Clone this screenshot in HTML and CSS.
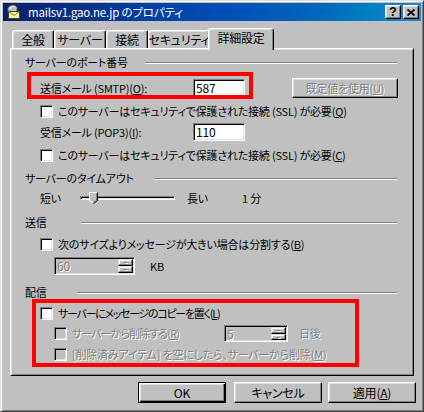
FILE: index.html
```html
<!DOCTYPE html>
<html lang="ja">
<head>
<meta charset="utf-8">
<title>mailsv1.gao.ne.jp のプロパティ</title>
<link rel="stylesheet" href="styles.css">
</head>
<body>
<div class="window">
  <div class="titlebar">
    <svg class="appicon" viewBox="0 0 16 16" width="16" height="16">
      <path d="M3 7 C2 3 5 1 8 1 C11 1 13 3 12 6 L12 8 L3 8 Z" fill="#c0c0c0" stroke="#404040" stroke-width="1"/>
      <path d="M4.5 5 C5 3 7 2.5 9 2.5" fill="none" stroke="#ffffff" stroke-width="1"/>
      <rect x="3.5" y="7.5" width="11" height="7" fill="#ffff99" stroke="#404040" stroke-width="1"/>
      <path d="M3.5 7.5 L9 11.5 L14.5 7.5" fill="none" stroke="#808000" stroke-width="1"/>
    </svg>
    <span class="title">mailsv1.gao.ne.jp のプロパティ</span>
    <div class="tbtns">
      <span class="tbtn help">?</span>
      <span class="tbtn close">
        <svg viewBox="0 0 8 7" width="8" height="7"><path d="M0.5 0.5 L7.5 6.5 M7.5 0.5 L0.5 6.5" stroke="#000" stroke-width="1.7" fill="none"/></svg>
      </span>
    </div>
  </div>

  <div class="tabs">
    <div class="tab w42">全般</div>
    <div class="tab w52">サーバー</div>
    <div class="tab w42">接続</div>
    <div class="tab w62">セキュリティ</div>
    <div class="tab sel">詳細設定</div>
  </div>

  <div class="panel">
    <div class="hdr"><span class="hdr-text">サーバーのポート番号</span><span class="rule r252"></span></div>

    <div class="row h20 mt8 ind1">
      <span class="lbl w153">送信メール (SMTP)(<u>O</u>):</span>
      <span class="edit">587</span>
      <span class="btn3d dbtn disabled">既定値を使用(<u>U</u>)</span>
    </div>

    <div class="row h17 mt5 ind1">
      <span class="chk"></span><span class="ctext">このサーバーはセキュリティで保護された接続 (SSL) が必要(<u>Q</u>)</span>
    </div>

    <div class="row h18 mt3 ind1">
      <span class="lbl w153">受信メール (POP3)(<u>I</u>):</span>
      <span class="edit">110</span>
    </div>

    <div class="row h17 mt6 ind1">
      <span class="chk"></span><span class="ctext">このサーバーはセキュリティで保護された接続 (SSL) が必要(<u>C</u>)</span>
    </div>

    <div class="hdr mt6"><span class="hdr-text">サーバーのタイムアウト</span><span class="rule r243"></span></div>

    <div class="row h16 mt4 ind1">
      <span class="lbl w40">短い</span>
      <span class="slider">
        <span class="track"></span>
        <svg class="thumb" viewBox="0 0 9 12" width="9" height="12">
          <path d="M0.5 0.5 H8.5 V8.5 L4.5 11.5 L0.5 8.5 Z" fill="#c0c0c0" stroke="none"/>
          <path d="M0.5 8.5 V0.5 H8" fill="none" stroke="#ffffff" stroke-width="1"/>
          <path d="M8.5 0.5 V8.5 L4.5 11.5" fill="none" stroke="#000000" stroke-width="1"/>
          <path d="M7.5 1.5 V8 L4.5 10.3" fill="none" stroke="#808080" stroke-width="1"/>
          <path d="M0.5 8.5 L4 11" fill="none" stroke="#ffffff" stroke-width="1"/>
        </svg>
      </span>
      <span class="lbl w55">長い</span>
      <span class="lbl">1 分</span>
    </div>

    <div class="hdr mt8"><span class="hdr-text">送信</span><span class="rule r316"></span></div>

    <div class="row h17 mt6 ind1">
      <span class="chk"></span><span class="ctext">次のサイズよりメッセージが大きい場合は分割する(<u>B</u>)</span>
    </div>

    <div class="row h18 mt4 ind2">
      <span class="spin w81">
        <span class="spin-val">60</span>
        <span class="spin-btns"><span class="sb up"></span><span class="sb down"></span></span>
      </span>
      <span class="lbl ml15">KB</span>
    </div>

    <div class="hdr mt9"><span class="hdr-text">配信</span><span class="rule r320"></span></div>

    <div class="row h17 mt5 ind1">
      <span class="chk"></span><span class="ctext tight2">サーバーにメッセージのコピーを置く(<u>L</u>)</span>
    </div>

    <div class="row h17 mt3 ind2">
      <span class="grp w170"><span class="chk off"></span><span class="ctext disabled tight1">サーバーから削除する(<u>R</u>)</span></span>
      <span class="spin w64">
        <span class="spin-val">5</span>
        <span class="spin-btns"><span class="sb up"></span><span class="sb down"></span></span>
      </span>
      <span class="lbl ml11 disabled">日後</span>
    </div>

    <div class="row h17 mt4 ind2">
      <span class="chk off"></span><span class="ctext disabled">[削除済みアイテム] を空にしたら、サーバーから削除(<u>M</u>)</span>
    </div>

    <div class="redbox box1"></div>
    <div class="redbox box2"></div>
  </div>

  <div class="buttons">
    <span class="btn3d pbtn default">OK</span>
    <span class="btn3d pbtn">キャンセル</span>
    <span class="btn3d pbtn">適用(<u>A</u>)</span>
  </div>
</div>
</body>
</html>
```

FILE: styles.css
```css
* { box-sizing: border-box; }
html, body { margin: 0; padding: 0; }
body {
  width: 424px;
  height: 412px;
  overflow: hidden;
  background: #c0c0c0;
  font-family: "Noto Sans CJK JP", "Noto Sans", sans-serif;
  font-size: 11px;
  letter-spacing: -0.2px;
  color: #000;
  font-feature-settings: "palt";
}
u { text-decoration: underline; text-underline-offset: 1px; }

.window {
  width: 424px;
  height: 412px;
  background: #c0c0c0;
  border: 1px solid;
  border-color: #dfdfdf #404040 #404040 #dfdfdf;
  box-shadow: inset 1px 1px 0 #ffffff, inset -1px -1px 0 #808080;
  padding: 2px;
  display: flex;
  flex-direction: column;
}

/* title bar */
.titlebar {
  height: 18px;
  flex: none;
  display: flex;
  align-items: center;
  color: #fff;
  background: linear-gradient(to right, #08206c 0%, #0a2f86 18%, #0040a4 35%, #0050b8 55%, #0066bc 75%, #0080c4 88%, #2a84c4 100%);
}
.appicon { flex: none; margin-left: 2px; }
.title { margin-left: 7px; line-height: 18px; white-space: nowrap; font-size: 11.5px; }
.tbtns { margin-left: auto; margin-right: 2px; display: flex; gap: 2px; }
.tbtn {
  width: 16px;
  height: 14px;
  background: #c0c0c0;
  border: 1px solid;
  border-color: #ffffff #000000 #000000 #ffffff;
  box-shadow: inset -1px -1px 0 #808080, inset 1px 1px 0 #dfdfdf;
  display: flex;
  align-items: center;
  justify-content: center;
  color: #000;
}
.tbtn.help {
  font-family: "Liberation Sans", Arial, sans-serif;
  font-weight: bold;
  font-size: 12px;
  line-height: 12px;
  letter-spacing: 0;
}

/* tabs */
.tabs {
  flex: none;
  height: 20px;
  margin: 7px 0 0 9px;
  display: flex;
  align-items: flex-end;
  position: relative;
  z-index: 2;
}
.tab {
  height: 18px;
  background: #c0c0c0;
  border-top: 1px solid #ffffff;
  border-left: 1px solid #ffffff;
  border-right: 1px solid #000000;
  box-shadow: inset -1px 0 0 #808080, inset 1px 1px 0 #dfdfdf;
  border-radius: 3px 3px 0 0;
  display: flex;
  align-items: center;
  justify-content: center;
  line-height: 16px;
  white-space: nowrap;
  font-size: 12px;
}
.tab.w42 { width: 42px; }
.tab.w52 { width: 52px; }
.tab.w62 { width: 62px; }
.tab.sel {
  width: 66px;
  height: 22px;
  margin: 0 0 -2px -2px;
  padding-bottom: 4px;
}

/* panel */
.panel {
  flex: none;
  position: relative;
  height: 328px;
  margin: 0 7px;
  border: 1px solid;
  border-color: #ffffff #000000 #000000 #ffffff;
  box-shadow: inset 1px 1px 0 #dfdfdf, inset -1px -1px 0 #808080;
  padding: 5px 16px 0 14px;
  display: flex;
  flex-direction: column;
}

.hdr {
  height: 16px;
  display: flex;
  align-items: center;
  line-height: 16px;
  white-space: nowrap;
}
.rule {
  margin-left: auto;
  height: 2px;
  border-top: 1px solid #808080;
  border-bottom: 1px solid #ffffff;
  margin-top: 2px;
}
.r252 { width: 252px; }
.r243 { width: 243px; }
.r316 { width: 316px; }
.r320 { width: 320px; }

.row { display: flex; align-items: center; white-space: nowrap; }
.h16 { height: 16px; line-height: 16px; }
.h17 { height: 17px; line-height: 17px; }
.h18 { height: 18px; line-height: 18px; }
.h20 { height: 20px; line-height: 20px; }
.mt3 { margin-top: 3px; }
.mt4 { margin-top: 4px; }
.mt5 { margin-top: 5px; }
.mt6 { margin-top: 6px; }
.mt8 { margin-top: 8px; }
.mt9 { margin-top: 9px; }
.ind1 { margin-left: 15px; }
.ind2 { margin-left: 29px; }
.ml11 { margin-left: 11px; }
.ml15 { margin-left: 15px; }

.lbl { flex: none; }
.w153 { width: 153px; }
.w40 { width: 40px; }
.w55 { width: 55px; }
.w170 { width: 170px; }
.grp { display: flex; align-items: center; flex: none; }

.disabled { color: #808080; text-shadow: 1px 1px 0 #ffffff; }
.tight1 { letter-spacing: -0.9px; }
.tight2 { letter-spacing: -1.3px; }

/* edit box */
.edit {
  flex: none;
  width: 52px;
  height: 18px;
  background: #ffffff;
  border: 1px solid;
  border-color: #808080 #ffffff #ffffff #808080;
  box-shadow: inset 1px 1px 0 #000000, inset -1px -1px 0 #dfdfdf;
  padding-left: 2px;
  line-height: 16px;
  font-size: 12px;
}

/* buttons */
.btn3d {
  background: #c0c0c0;
  border: 1px solid;
  border-color: #ffffff #000000 #000000 #ffffff;
  box-shadow: inset -1px -1px 0 #808080, inset 1px 1px 0 #dfdfdf;
  display: flex;
  align-items: center;
  justify-content: center;
  white-space: nowrap;
}
.dbtn {
  flex: none;
  width: 106px;
  height: 20px;
  margin-left: 47px;
  line-height: 18px;
}

/* checkbox */
.chk {
  flex: none;
  width: 13px;
  height: 13px;
  background: #ffffff;
  border: 1px solid;
  border-color: #808080 #ffffff #ffffff #808080;
  box-shadow: inset 1px 1px 0 #000000, inset -1px -1px 0 #dfdfdf;
}
.chk.off { background: #c0c0c0; }
.ctext { margin-left: 5px; }

/* slider */
.slider {
  flex: none;
  position: relative;
  width: 107px;
  height: 16px;
  display: flex;
  align-items: center;
}
.track {
  width: 95px;
  height: 4px;
  border: 1px solid;
  border-color: #808080 #ffffff #ffffff #808080;
  box-shadow: inset 1px 1px 0 #000000, inset -1px -1px 0 #dfdfdf;
}
.thumb { position: absolute; left: 9px; top: 2px; }

/* spinner */
.spin {
  flex: none;
  height: 18px;
  display: flex;
  background: #c0c0c0;
  border: 1px solid;
  border-color: #808080 #ffffff #ffffff #808080;
  box-shadow: inset 1px 1px 0 #000000, inset -1px -1px 0 #dfdfdf;
  padding: 1px;
}
.row.h17 .spin { height: 17px; }
.w81 { width: 81px; }
.w64 { width: 64px; }
.spin-val {
  flex: 1;
  color: #808080;
  text-shadow: 1px 1px 0 #ffffff;
  padding-left: 1px;
  line-height: 14px;
  font-size: 12px;
}
.spin-btns { width: 15px; display: flex; flex-direction: column; }
.sb {
  flex: 1;
  background: #c0c0c0;
  border: 1px solid;
  border-color: #dfdfdf #000000 #000000 #dfdfdf;
  box-shadow: inset -1px -1px 0 #808080, inset 1px 1px 0 #ffffff;
  position: relative;
}
.sb::after {
  content: "";
  position: absolute;
  left: 5px;
  top: 2px;
  width: 3px;
  height: 1px;
  background: #808080;
  box-shadow: 1px 1px 0 #ffffff;
}

/* annotations */
.redbox {
  position: absolute;
  border: 4px solid #ff0000;
  pointer-events: none;
}
.box1 { left: 16px; top: 23px; width: 226px; height: 27px; }
.box2 { left: 21px; top: 250px; width: 327px; height: 68px; }

/* bottom buttons */
.buttons {
  flex: none;
  display: flex;
  justify-content: flex-end;
  gap: 6px;
  margin: 6px 5px 0 0;
}
.pbtn { width: 88px; height: 21px; line-height: 19px; font-size: 12px; }
.pbtn.default {
  margin-right: 2px;
  border-color: #000000;
  box-shadow: inset 1px 1px 0 #ffffff, inset -1px -1px 0 #000000, inset -2px -2px 0 #808080, inset 2px 2px 0 #dfdfdf;
}
```
